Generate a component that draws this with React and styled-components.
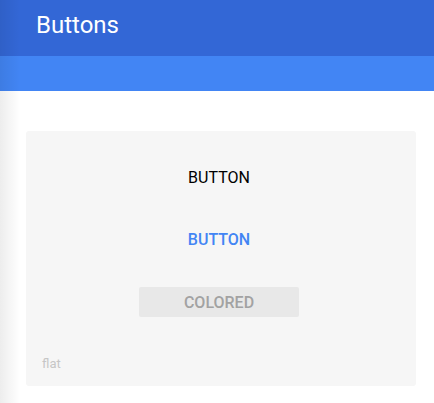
import React from 'react'
import styled, { createGlobalStyle } from 'styled-components'

const GlobalStyle = createGlobalStyle`
  html, body {
    margin: 0;
    padding: 0;
    background: #fff;
    font-family: Roboto, "Noto Sans", sans-serif;
  }
`

const Page = styled.div`
  position: relative;
  width: 434px;
  height: 403px;
  overflow: hidden;
  background: #fff;
`

const EdgeShadow = styled.div`
  position: absolute;
  left: 0;
  top: 0;
  bottom: 0;
  width: 20px;
  background: linear-gradient(to right, rgba(0, 0, 0, 0.07), rgba(0, 0, 0, 0));
  pointer-events: none;
`

const TopBar = styled.header`
  height: 56px;
  background: #3367d6;
  display: flex;
  align-items: center;
  padding-left: 36px;
  color: #fff;
  font-size: 24px;
  line-height: 1;
  padding-bottom: 6px;
  box-sizing: border-box;
`

const SubBar = styled.div`
  height: 35px;
  background: #4285f4;
`

const Content = styled.main`
  padding: 40px 18px 0 26px;
`

const Card = styled.section`
  background: #f6f6f6;
  border-radius: 3px;
  height: 255px;
  box-sizing: border-box;
  display: flex;
  flex-direction: column;
  align-items: center;
  padding: 31px 4px 0 0;
`

const FlatButton = styled.button`
  border: none;
  background: ${p => (p.$disabled ? '#e8e8e8' : 'transparent')};
  color: ${p => p.$color};
  font-family: Roboto, "Noto Sans", sans-serif;
  font-size: 16px;
  font-weight: ${p => (p.$medium ? 500 : 400)};
  width: 160px;
  height: 30px;
  border-radius: 2px;
  padding: 0;
  margin-bottom: ${p => p.$gap}px;
  cursor: pointer;
`

const Caption = styled.div`
  align-self: flex-start;
  margin-left: 16px;
  margin-top: 39px;
  font-size: 13px;
  color: #c6c6c6;
`

const App = () => (
  <Page>
    <GlobalStyle />
    <TopBar>Buttons</TopBar>
    <SubBar />
    <Content>
      <Card>
        <FlatButton $color='#000' $gap={32}>BUTTON</FlatButton>
        <FlatButton $color='#4285f4' $medium $gap={33}>BUTTON</FlatButton>
        <FlatButton $color='#a2a2a2' $disabled $medium $gap={0}>COLORED</FlatButton>
        <Caption>flat</Caption>
      </Card>
    </Content>
    <EdgeShadow />
  </Page>
)

export default App
